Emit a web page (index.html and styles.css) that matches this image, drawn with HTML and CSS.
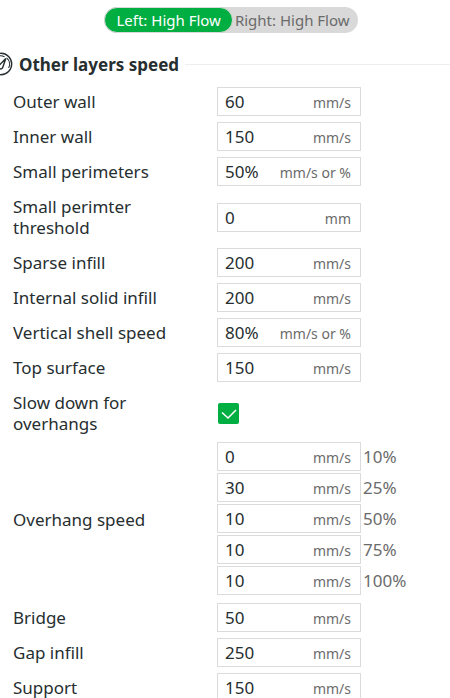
FILE: index.html
```
<!DOCTYPE html>
<html lang="en">
<head>
    <meta charset="UTF-8">
    <meta name="viewport" content="width=device-width, initial-scale=1.0">
    <title>Speed settings</title>
    <link rel="stylesheet" href="styles.css">
</head>
<body>
    <div class="switch-bar">
        <div class="switch">
            <button type="button" class="switch-btn active">Left: High Flow</button>
            <button type="button" class="switch-btn">Right: High Flow</button>
        </div>
    </div>

    <div class="section-title">
        <svg class="gauge" viewBox="0 0 24 24" width="24" height="24" fill="none" stroke="#262e30">
            <circle cx="12" cy="12" r="10.7" stroke-width="1.4"/>
            <path d="M4.5 16a8.3 8.3 0 0 1 11-11.3M17.6 5.8a8.3 8.3 0 0 1 2 10.2" stroke-width="1.1"/>
            <path d="M16.8 6.5l-6 6.2a2.2 2.2 0 1 0 3 2.6z" stroke-width="1.4"/>
        </svg>
        <h2>Other layers speed</h2>
        <hr>
    </div>

    <form class="settings">
        <div class="row">
            <label for="outer">Outer wall</label>
            <div class="field"><input type="text" id="outer" value="60"><span>mm/s</span></div>
        </div>
        <div class="row">
            <label for="inner">Inner wall</label>
            <div class="field"><input type="text" id="inner" value="150"><span>mm/s</span></div>
        </div>
        <div class="row">
            <label for="small">Small perimeters</label>
            <div class="field"><input type="text" id="small" value="50%"><span>mm/s or %</span></div>
        </div>
        <div class="row row-tall">
            <label for="threshold">Small perimter threshold</label>
            <div class="field"><input type="text" id="threshold" value="0"><span>mm</span></div>
        </div>
        <div class="row">
            <label for="sparse">Sparse infill</label>
            <div class="field"><input type="text" id="sparse" value="200"><span>mm/s</span></div>
        </div>
        <div class="row">
            <label for="solid">Internal solid infill</label>
            <div class="field"><input type="text" id="solid" value="200"><span>mm/s</span></div>
        </div>
        <div class="row">
            <label for="shell">Vertical shell speed</label>
            <div class="field"><input type="text" id="shell" value="80%"><span>mm/s or %</span></div>
        </div>
        <div class="row">
            <label for="top">Top surface</label>
            <div class="field"><input type="text" id="top" value="150"><span>mm/s</span></div>
        </div>
        <div class="row row-check">
            <label for="slow">Slow down for overhangs</label>
            <div class="check">
                <input type="checkbox" id="slow" checked>
                <svg viewBox="0 0 21 21" width="21" height="21" fill="none" stroke="#fff" stroke-width="1.5"><path d="M4 9.5l6 5.5 8-8"/></svg>
            </div>
        </div>
        <div class="row">
            <label for="over10">Overhang speed</label>
            <div class="overhangs">
                <div class="overhang">
                    <div class="field"><input type="text" id="over10" value="0"><span>mm/s</span></div>
                    <label for="over10">10%</label>
                </div>
                <div class="overhang">
                    <div class="field"><input type="text" id="over25" value="30"><span>mm/s</span></div>
                    <label for="over25">25%</label>
                </div>
                <div class="overhang">
                    <div class="field"><input type="text" id="over50" value="10"><span>mm/s</span></div>
                    <label for="over50">50%</label>
                </div>
                <div class="overhang">
                    <div class="field"><input type="text" id="over75" value="10"><span>mm/s</span></div>
                    <label for="over75">75%</label>
                </div>
                <div class="overhang">
                    <div class="field"><input type="text" id="over100" value="10"><span>mm/s</span></div>
                    <label for="over100">100%</label>
                </div>
            </div>
        </div>
        <div class="row">
            <label for="bridge">Bridge</label>
            <div class="field"><input type="text" id="bridge" value="50"><span>mm/s</span></div>
        </div>
        <div class="row">
            <label for="gap">Gap infill</label>
            <div class="field"><input type="text" id="gap" value="250"><span>mm/s</span></div>
        </div>
        <div class="row">
            <label for="support">Support</label>
            <div class="field"><input type="text" id="support" value="150"><span>mm/s</span></div>
        </div>
    </form>
</body>
</html>
```
FILE: styles.css
```
* {
    box-sizing: border-box;
}

body {
    margin: 0;
    padding-top: 7px;
    background-color: #fff;
    color: #262e30;
    font-family: "Noto Sans", "Liberation Sans", sans-serif;
    font-size: 17px;
    line-height: 21px;
    overflow: hidden;
}

input,
button {
    font: inherit;
    color: inherit;
}

.switch-bar {
    display: flex;
    justify-content: center;
    padding-left: 12px;
}

.switch {
    display: flex;
    border-radius: 13px;
    background-color: #d9d9d9;
}

.switch-btn {
    height: 26px;
    padding: 0 8px 0 2px;
    border: none;
    border-radius: 13px;
    background: none;
    color: #6b6b6b;
    font-size: 15px;
    white-space: nowrap;
    cursor: pointer;
}

.switch-btn.active {
    padding: 0 11px;
    border: 1px solid #d9d9d9;
    background-color: #00ae42;
    color: #fff;
}

.section-title {
    display: flex;
    align-items: center;
    height: 24px;
    margin: 19px 0 11px -11px;
}

.section-title h2 {
    margin: 0 6px;
    font-size: 17px;
    font-weight: bold;
}

.section-title hr {
    flex: 1;
    margin: 0;
    border: none;
    border-top: 1px solid #eee;
}

.settings {
    display: flex;
    flex-direction: column;
    gap: 6px;
    padding-left: 13px;
}

.row {
    display: grid;
    grid-template-columns: 160px 1fr;
    column-gap: 44px;
    align-items: center;
}

.row-tall {
    padding: 4px 0;
}

.row-check {
    padding: 4px 0 2px;
}

.field {
    display: flex;
    align-items: center;
    width: 144px;
    height: 29px;
    padding: 0 9px 0 7px;
    border: 1px solid #dbdbdb;
}

.field input {
    flex: 1;
    min-width: 0;
    padding: 0;
    border: none;
    outline: none;
    background: none;
}

.field span {
    padding-top: 2px;
    color: #6b6b6b;
    font-size: 14px;
}

.check {
    display: grid;
    width: 23px;
    padding: 0 1px;
}

.check input,
.check svg {
    grid-area: 1 / 1;
}

.check input {
    appearance: none;
    width: 21px;
    height: 21px;
    margin: 0;
    border-radius: 2px;
    background-color: #00ae42;
}

.check svg {
    pointer-events: none;
}

.overhangs {
    display: flex;
    flex-direction: column;
    gap: 2px;
    padding-bottom: 2px;
}

.overhang {
    display: flex;
    align-items: center;
    gap: 2px;
}

.overhang label {
    color: #6b6b6b;
}
```
